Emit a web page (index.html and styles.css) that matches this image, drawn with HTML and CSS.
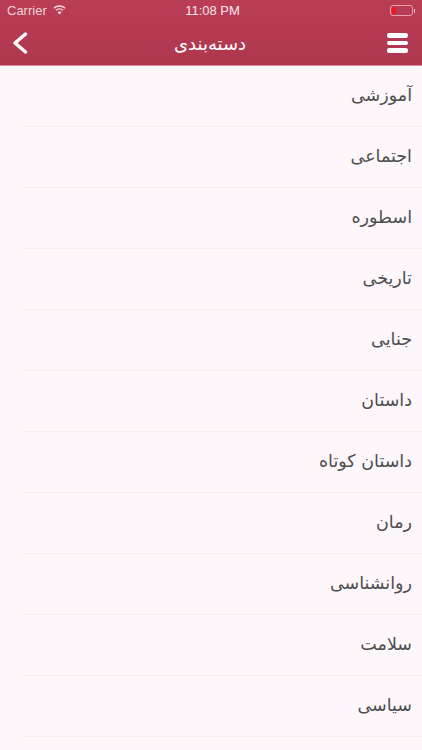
FILE: index.html
```html
<!DOCTYPE html>
<html lang="fa">
<head>
<meta charset="utf-8">
<title>دسته‌بندی</title>
<link rel="stylesheet" href="styles.css">
</head>
<body>
<header class="top">
  <div class="status">
    <div class="status-left">
      <span>Carrier</span>
      <svg class="wifi" width="13" height="10" viewBox="0 0 13 10"><path d="M6.500 9.400 4.500 7.200a2.900 2.900 0 0 1 4 0Z" fill="currentColor"/><path d="M2.900 5.400a5.100 5.100 0 0 1 7.200 0M.9 3.300a8 8 0 0 1 11.200 0" fill="none" stroke="currentColor" stroke-width="1.300"/></svg>
    </div>
    <span class="clock">11:08 PM</span>
    <div class="battery"><span class="cell"><i class="charge"></i></span><span class="nub"></span></div>
  </div>
  <nav class="bar">
    <svg class="back" width="16" height="22" viewBox="0 0 16 22"><path d="M13.500 2 3 11l10.500 9" fill="none" stroke="#fff" stroke-width="3.400" stroke-linecap="round" stroke-linejoin="round"/></svg>
    <h1 class="title" dir="rtl">دسته‌بندی</h1>
    <div class="menu"><i></i><i></i><i></i></div>
  </nav>
</header>
<ul class="list" dir="rtl">
  <li>آموزشی</li>
  <li>اجتماعی</li>
  <li>اسطوره</li>
  <li>تاریخی</li>
  <li>جنایی</li>
  <li>داستان</li>
  <li>داستان کوتاه</li>
  <li>رمان</li>
  <li>روانشناسی</li>
  <li>سلامت</li>
  <li>سیاسی</li>
</ul>
</body>
</html>
```
FILE: styles.css
```css
* { box-sizing: border-box; }
html, body { margin: 0; height: 100%; overflow: hidden; }
body { background: #fdf6fa; font-family: "DejaVu Sans", sans-serif; }
.top { height: 66px; background: linear-gradient(#ba3d56, #ae3750); border-bottom: 1px solid #e58ba0; color: #fff; }
.status { height: 21px; display: grid; grid-template-columns: 1fr auto 1fr; align-items: center; padding: 0 7px; font: 13px "Liberation Sans", sans-serif; }
.status-left { display: flex; align-items: center; gap: 6px; color: #f0d5da; }
.wifi { color: #f3dde1; margin-bottom: 1px; }
.clock { color: #f8e6ea; font-weight: 500; margin-left: 3px; }
.battery { display: flex; align-items: center; justify-content: flex-end; }
.cell { display: block; width: 23px; height: 11px; padding: 1px; border: 1px solid #e8a0ac; border-radius: 3px; }
.charge { display: block; width: 4px; height: 100%; background: #f4141f; }
.nub { width: 1.500px; height: 4px; background: #e8c0c8; margin-left: 1px; }
.bar { height: 44px; display: grid; grid-template-columns: 1fr auto 1fr; align-items: center; padding: 0 14px 0 12px; }
.back { display: block; }
.title { margin: 0; font-size: 18px; font-weight: 400; color: #fff; }
.menu { justify-self: end; width: 21px; display: flex; flex-direction: column; gap: 3px; }
.menu i { display: block; height: 4.500px; border-radius: 2.250px; background: #fff; }
.list { list-style: none; margin: 0; padding: 0; }
.list li { height: 61px; margin-left: 22px; padding: 0 10px 2px 0; display: flex; align-items: center; font-size: 17.500px; color: #4e4e50; border-bottom: 1px solid #f8ecef; }
```
